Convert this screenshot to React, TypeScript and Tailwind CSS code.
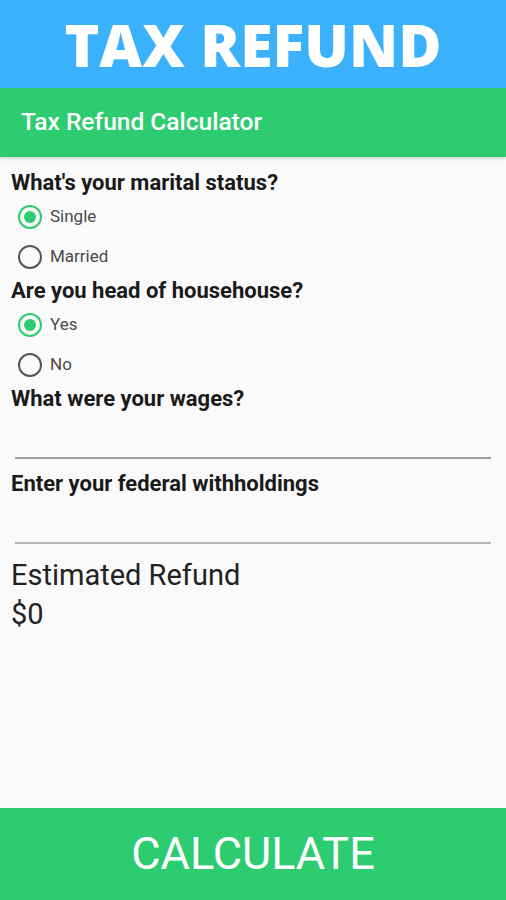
import { useState } from 'react';

function Radio({ label, checked, onClick }: { label: string; checked: boolean; onClick: () => void }) {
  return (
    <button onClick={onClick} className="flex items-center h-[40px] pl-[18px] gap-[8px] text-left">
      <span
        className={`w-[24px] h-[24px] rounded-full border-2 flex items-center justify-center ${
          checked ? 'border-[#2ecc71]' : 'border-[#555555]'
        }`}
      >
        {checked && <span className="w-[12px] h-[12px] rounded-full bg-[#2ecc71]" />}
      </span>
      <span className="text-[17px] text-[#4a4a4a]">{label}</span>
    </button>
  );
}

export default function App() {
  const [status, setStatus] = useState('single');
  const [head, setHead] = useState('yes');

  return (
    <div className="w-full h-[900px] flex flex-col bg-[#fafafa] font-['Roboto',sans-serif]">
      <header className="h-[88px] bg-[#3bb0fb] flex items-center justify-center">
        <h1 className="text-white text-[59px] font-extrabold font-['Open_Sans',sans-serif] leading-none">
          TAX REFUND
        </h1>
      </header>
      <div className="h-[69px] bg-[#2ecc71] flex items-center px-[21px] shadow-[0_2px_3px_rgba(0,0,0,0.15)]">
        <span className="text-white text-[24.5px] font-medium">Tax Refund Calculator</span>
      </div>

      <main className="flex-1 flex flex-col pt-[12px]">
        <p className="px-[11px] text-[22px] font-bold text-[#1a1a1a] leading-[28px]">What's your marital status?</p>
        <Radio label="Single" checked={status === 'single'} onClick={() => setStatus('single')} />
        <Radio label="Married" checked={status === 'married'} onClick={() => setStatus('married')} />
        <p className="px-[11px] text-[22px] font-bold text-[#1a1a1a] leading-[28px]">Are you head of househouse?</p>
        <Radio label="Yes" checked={head === 'yes'} onClick={() => setHead('yes')} />
        <Radio label="No" checked={head === 'no'} onClick={() => setHead('no')} />

        <p className="px-[11px] text-[22px] font-bold text-[#1a1a1a] leading-[28px]">What were your wages?</p>
        <input className="mx-[15px] mt-[10px] h-[36px] border-b-2 border-[#9e9e9e] bg-transparent outline-none" />

        <p className="px-[11px] text-[22px] font-bold text-[#1a1a1a] leading-[28px] mt-[11px]">Enter your federal withholdings</p>
        <input className="mx-[15px] mt-[10px] h-[36px] border-b-2 border-[#b5b5b5] bg-transparent outline-none" />

        <p className="px-[11px] text-[29px] text-[#222222] leading-[36px] mt-[13px]">Estimated Refund</p>
        <p className="px-[11px] text-[29px] text-[#222222] leading-[36px] mt-[3px]">$0</p>
      </main>

      <button className="h-[92px] bg-[#2ecc71] text-white text-[45px] flex items-center justify-center">
        CALCULATE
      </button>
    </div>
  );
}
